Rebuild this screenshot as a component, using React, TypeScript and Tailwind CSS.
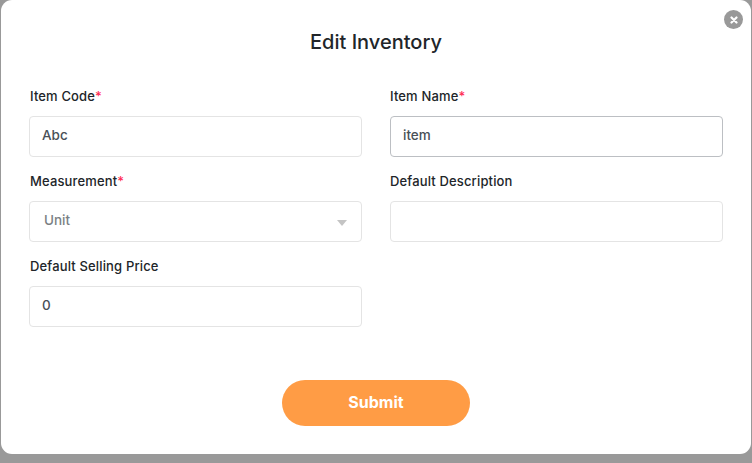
import React from "react";

function Label({ text, req, left }: { text: string; req?: boolean; left?: boolean }) {
  return (
    <div className={`h-[18px] text-[13px] tracking-[0.15px] leading-[18px] font-medium text-[#212529] mb-[11px] ${left ? "pl-px" : ""}`}>
      {text}
      {req && <span className="text-[#ff2d55]">*</span>}
    </div>
  );
}

function Field({ label, req, value, focus, left }: { label: string; req?: boolean; value?: string; focus?: boolean; left?: boolean }) {
  return (
    <div className="h-[85px] pt-[4px]">
      <Label text={label} req={req} left={left} />
      <div
        className={`h-[41px] rounded-[4px] border bg-white pl-[12px] pb-[2px] flex items-center text-[13.5px] font-medium text-[#495057] ${
          focus ? "border-[#bcbfc3]" : "border-[#e4e4e4]"
        }`}
      >
        {value}
      </div>
    </div>
  );
}

export default function App() {
  return (
    <div className="w-[752px] h-[463px] bg-[#999999] px-px overflow-hidden font-['Inter','Liberation_Sans',sans-serif]">
      <div className="relative h-[454px] w-[750px] bg-white rounded-[11px]">
        <button className="absolute right-[8px] top-[10px] w-[19px] h-[19px] rounded-full bg-[#999999] flex items-center justify-center">
          <svg width="8" height="8" viewBox="0 0 8 8">
            <path d="M1.5 1.5 L6.5 6.5 M6.5 1.5 L1.5 6.5" stroke="#ffffff" strokeWidth="2.2" strokeLinecap="round" />
          </svg>
        </button>
        <h1 className="pt-[29px] h-[83px] text-center text-[20px] leading-[26px] font-medium text-[#212529]">
          Edit Inventory
        </h1>
        <div className="grid grid-cols-[333px_333px] gap-x-[28px] px-[28px]">
          <Field label="Item Code" req value="Abc" left />
          <Field label="Item Name" req value="item" focus />
          <div className="h-[85px] pt-[4px]">
            <Label text="Measurement" req left />
            <div className="h-[41px] rounded-[4px] border border-[#e4e4e4] bg-white px-[14px] pb-[2px] flex items-center justify-between text-[13.5px] font-medium text-[#7b7f84]">
              <span>Unit</span>
              <span className="w-0 h-0 mt-[5px] border-l-[5px] border-r-[5px] border-t-[6px] border-l-transparent border-r-transparent border-t-[#c4c4c4]" />
            </div>
          </div>
          <Field label="Default Description" />
          <Field label="Default Selling Price" value="0" left />
        </div>
        <div className="flex justify-center mt-[42px]">
          <button className="w-[188px] h-[46px] pb-[2px] rounded-full bg-[#ff9c45] text-white text-[16px] font-bold">
            Submit
          </button>
        </div>
      </div>
    </div>
  );
}
